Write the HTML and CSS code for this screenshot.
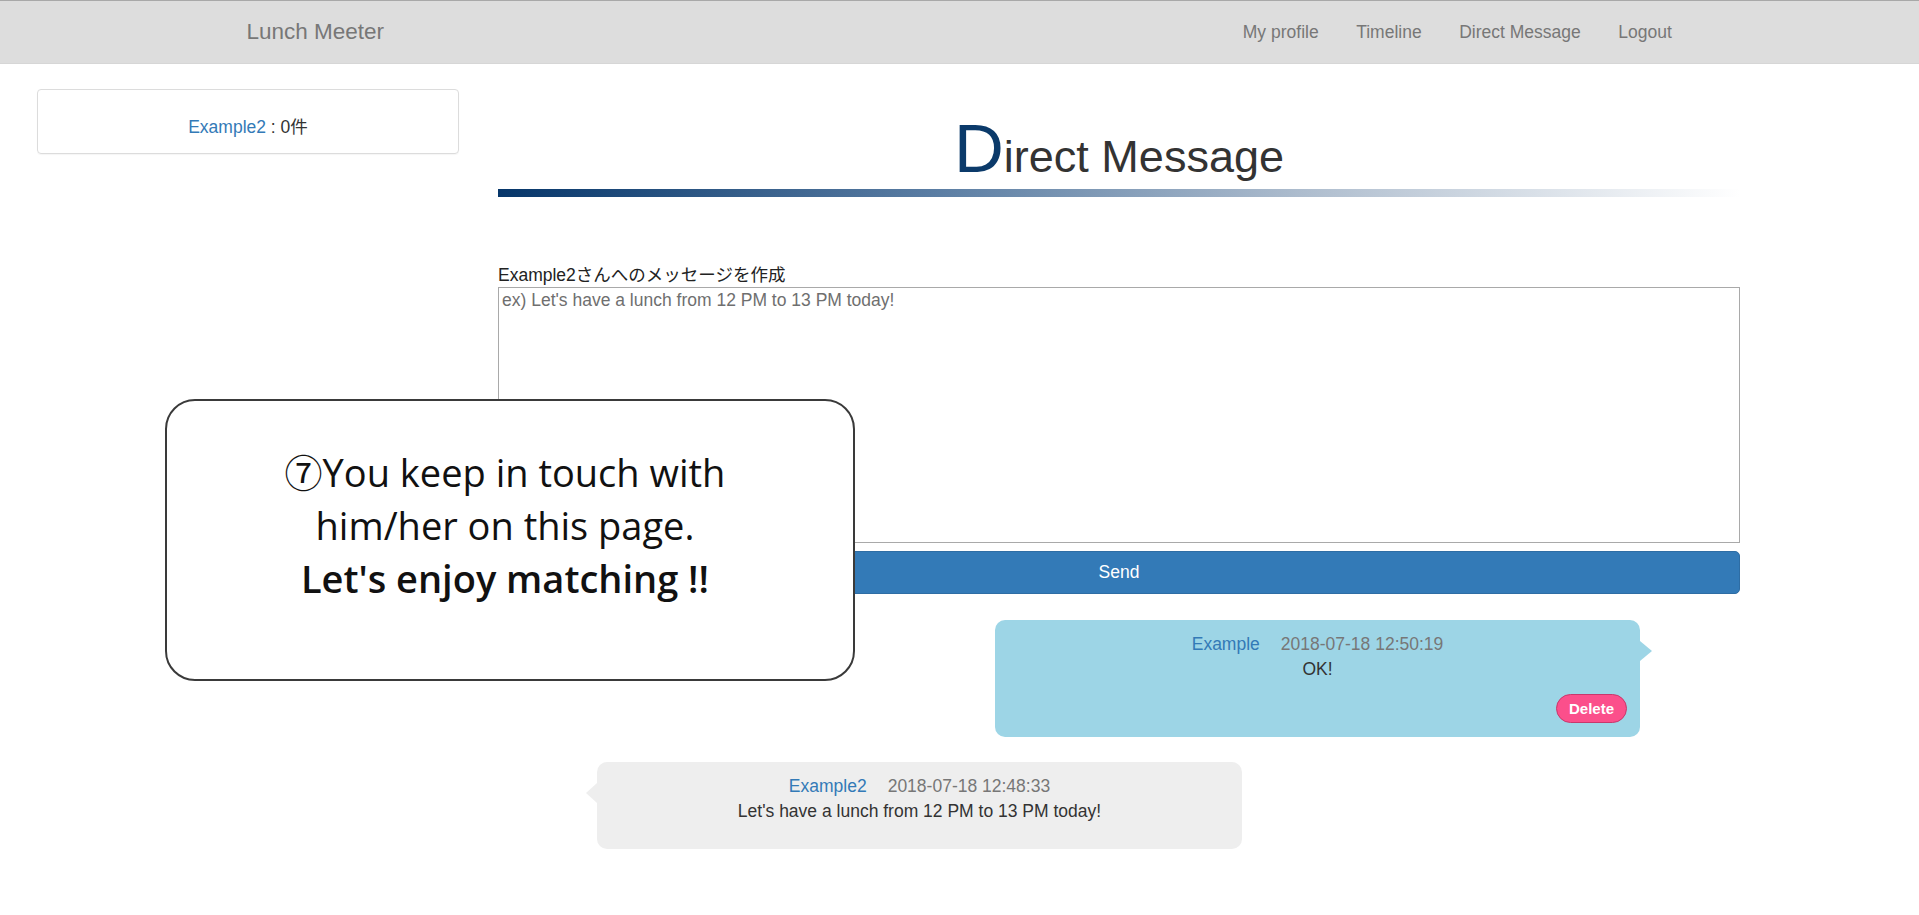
FILE: index.html
```html
<!DOCTYPE html>
<html lang="ja">
<head>
<meta charset="utf-8">
<title>Lunch Meeter - Direct Message</title>
<link rel="stylesheet" href="styles.css">
</head>
<body>
<nav class="navbar">
  <div class="nav-inner">
    <a class="brand" href="#">Lunch Meeter</a>
    <ul class="nav-links">
      <li><a href="#">My profile</a></li>
      <li><a href="#">Timeline</a></li>
      <li><a href="#">Direct Message</a></li>
      <li><a href="#">Logout</a></li>
    </ul>
  </div>
</nav>

<div class="page">
  <aside class="side">
    <div class="side-card"><a href="#" class="link">Example2</a> : 0件</div>
  </aside>

  <main class="main">
    <h1 class="title"><span class="cap">D</span>irect Message</h1>
    <div class="title-bar"></div>

    <form class="compose">
      <label class="compose-label" for="msg">Example2さんへのメッセージを作成</label>
      <textarea id="msg" class="compose-text" placeholder="ex) Let's have a lunch from 12 PM to 13 PM today!"></textarea>
      <button type="button" class="send-btn">Send</button>
    </form>

    <div class="messages">
      <div class="bubble bubble-mine">
        <div class="meta"><a href="#" class="link">Example</a><span class="date">2018-07-18 12:50:19</span></div>
        <div class="body">OK!</div>
        <div class="actions"><button type="button" class="delete-btn">Delete</button></div>
      </div>
      <div class="bubble bubble-theirs">
        <div class="meta"><a href="#" class="link">Example2</a><span class="date">2018-07-18 12:48:33</span></div>
        <div class="body">Let's have a lunch from 12 PM to 13 PM today!</div>
      </div>
    </div>
  </main>
</div>

<div class="callout">
  <p>⑦You keep in touch with<br>him/her on this page.<br><strong>Let's enjoy matching !!</strong></p>
</div>
</body>
</html>
```

FILE: styles.css
```css
* { box-sizing: border-box; }

html, body {
  margin: 0;
  padding: 0;
}

body {
  font-family: "Liberation Sans", Arial, "Noto Sans CJK JP", sans-serif;
  font-size: 17.5px;
  line-height: 1.43;
  color: #333;
  background: #fff;
  position: relative;
  min-height: 915px;
}

a { text-decoration: none; }

.link { color: #337ab7; }

/* navbar */
.navbar {
  background: #dddddd;
  border-top: 1px solid #a8a8a8;
  border-bottom: 1px solid #d6d6d6;
  height: 64px;
}

.nav-inner {
  width: 1464px;
  margin: 0 auto;
  height: 100%;
  display: flex;
  align-items: center;
  justify-content: space-between;
  padding-right: 1px;
}

.brand {
  color: #777;
  font-size: 22.5px;
  padding: 0 19px;
  line-height: 62px;
}

.nav-links {
  list-style: none;
  margin: 0;
  padding: 0;
  display: flex;
}

.nav-links a {
  display: block;
  color: #777;
  padding: 0 18.75px;
  line-height: 62px;
}

/* page layout */
.page {
  display: grid;
  grid-template-columns: 422px 1242px;
  column-gap: 39px;
  padding-left: 37px;
  padding-top: 25px;
}

.side-card {
  border: 1px solid #dcdcdc;
  border-radius: 4px;
  height: 65px;
  text-align: center;
  line-height: 25px;
  padding-top: 25px;
  box-shadow: 0 1px 1px rgba(0,0,0,0.04);
}

.main {
  padding-top: 30px;
}

.title {
  margin: 0;
  text-align: center;
  font-weight: normal;
  font-size: 45px;
  line-height: 60px;
  color: #333;
}

.title .cap {
  font-size: 69px;
  color: #0b3a6a;
}

.title-bar {
  height: 8px;
  margin-top: 2px;
  background: linear-gradient(to right, #06366a 0%, #5a7da3 35%, #aebdce 65%, #ffffff 100%);
}

/* compose */
.compose {
  margin-top: 67px;
  display: flex;
  flex-direction: column;
}

.compose-label {
  font-family: "Liberation Sans", Arial, "Noto Sans CJK JP", sans-serif;
  font-size: 17.5px;
  line-height: 22.5px;
  color: #222;
}

.compose-text {
  height: 256px;
  margin-top: 0;
  border: 1px solid #a9a9a9;
  padding: 2px 3px;
  font-family: "Liberation Sans", Arial, sans-serif;
  font-size: 17.5px;
  line-height: 20px;
  resize: none;
}

.compose-text::placeholder {
  color: #6f6f6f;
}

.send-btn {
  margin-top: 8px;
  height: 43px;
  background: #337ab7;
  border: 1px solid #2e6da4;
  border-radius: 5px;
  color: #fff;
  font-family: "Liberation Sans", Arial, sans-serif;
  font-size: 17.5px;
}

/* messages */
.messages {
  display: flex;
  flex-direction: column;
  gap: 25px;
  margin-top: 26px;
}

.bubble {
  position: relative;
  width: 645px;
  border-radius: 10px;
  text-align: center;
  padding: 12px 13px 14px;
}

.bubble-mine {
  align-self: flex-end;
  margin-right: 100px;
  background: #9dd5e6;
  height: 117px;
}

.bubble-theirs {
  align-self: flex-start;
  margin-left: 99px;
  background: #eeeeee;
  height: 87px;
}

.bubble::after {
  content: "";
  position: absolute;
  top: 21px;
  border-top: 10px solid transparent;
  border-bottom: 10px solid transparent;
}

.bubble-mine::after {
  right: -12px;
  border-left: 12px solid #9dd5e6;
}

.bubble-theirs::after {
  left: -11px;
  border-right: 11px solid #eeeeee;
}

.meta .date {
  color: #777;
  margin-left: 21px;
}

.actions {
  display: flex;
  justify-content: flex-end;
  margin-top: 12px;
}

.delete-btn {
  background: #fb4f8b;
  border: 1px solid #c8386c;
  border-radius: 15px;
  color: #fff;
  font-family: "Liberation Sans", Arial, sans-serif;
  font-weight: bold;
  font-size: 15px;
  height: 29px;
  padding: 0 12px;
}

/* callout overlay */
.callout {
  position: absolute;
  left: 165px;
  top: 399px;
  width: 690px;
  height: 282px;
  background: #fff;
  border: 2px solid #3a3a3a;
  border-radius: 30px;
  display: flex;
  align-items: center;
  justify-content: center;
}

.callout p {
  margin: 0;
  text-align: center;
  font-family: "Open Sans", "Noto Sans", "Noto Sans CJK JP", sans-serif;
  font-size: 38px;
  line-height: 53px;
  color: #111;
  padding-bottom: 30px;
  padding-right: 10px;
}

.callout strong {
  font-weight: 600;
}
```
